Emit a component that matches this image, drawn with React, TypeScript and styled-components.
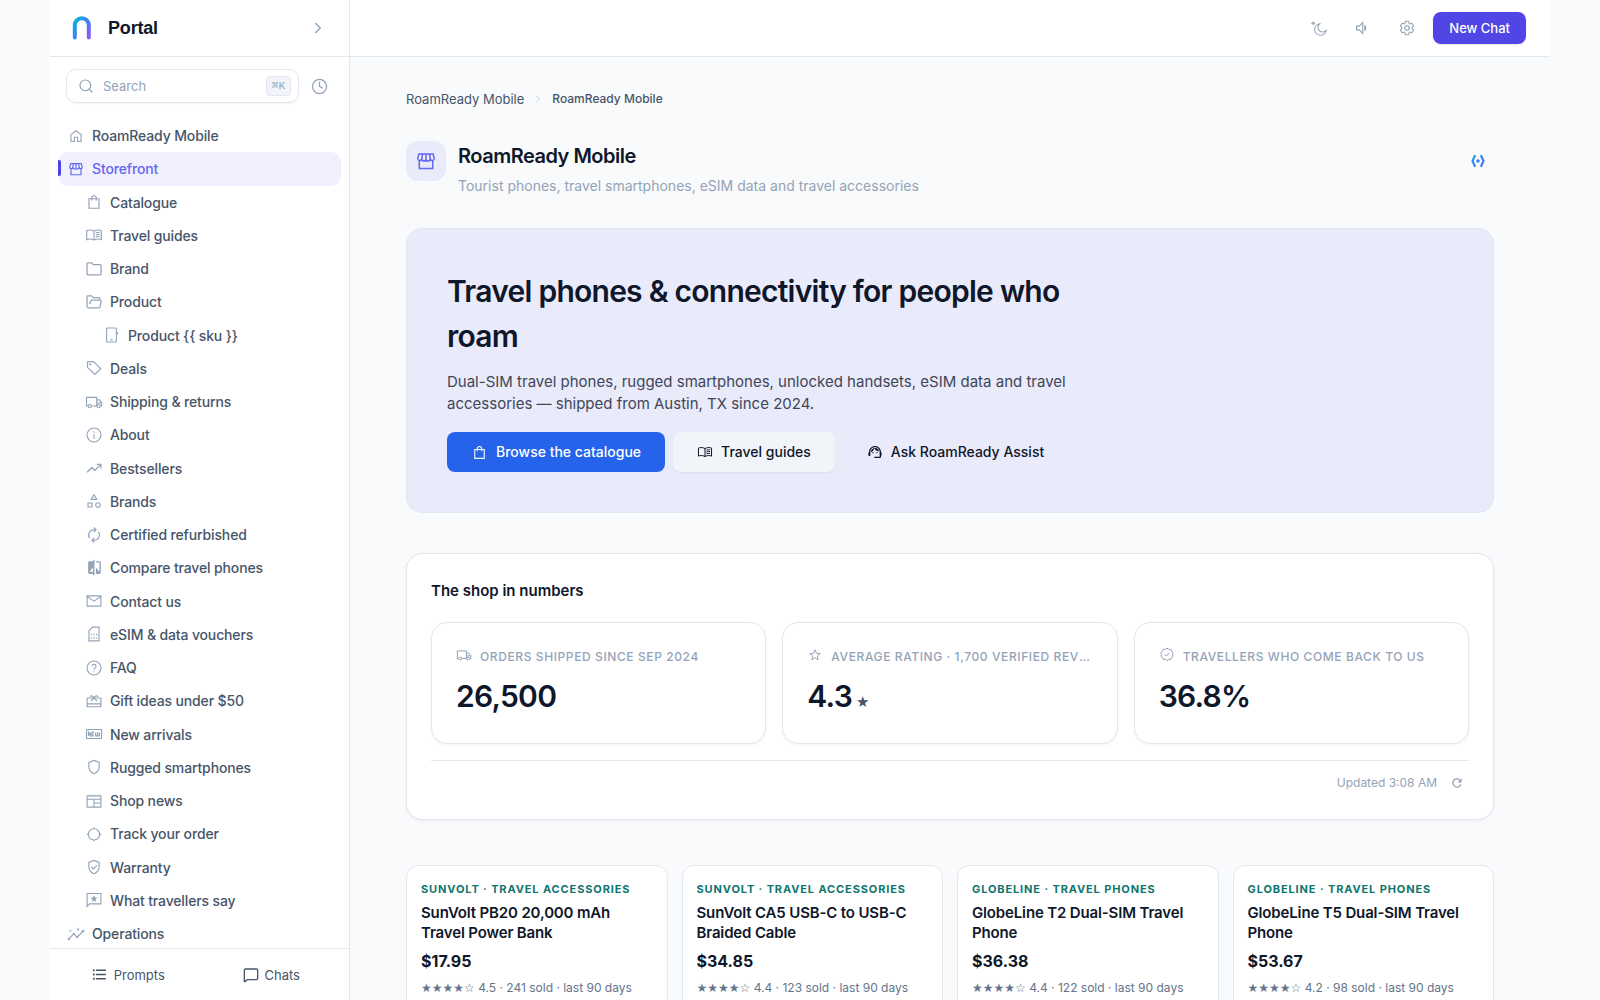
import React from "react";
import styled, { createGlobalStyle } from "styled-components";
import { MdCompare, MdRefresh, MdFormatListBulleted, MdSupportAgent } from "react-icons/md";
import { HiOutlineCog6Tooth } from "react-icons/hi2";
import { ChevronRight, Clock, MessageSquare, Search } from "lucide-react";

const color = {
  page: "#f8fafc",
  surface: "#ffffff",
  line: "#e4e6ee",
  ink: "#0f172a",
  text: "#475569",
  muted: "#94a3b8",
  soft: "#e9eafa",
  accent: "#6366f1",
  accentStrong: "#4f46e5",
  blue: "#2563eb",
  teal: "#0f766e",
};

const GlobalStyle = createGlobalStyle`
  *, *::before, *::after { box-sizing: border-box; }
  body {
    margin: 0;
    background: ${color.page};
    color: ${color.ink};
    font-family: Inter, "Liberation Sans", sans-serif;
    font-size: 14px;
    line-height: 20px;
  }
  h1, h2, h3, p, ul { margin: 0; padding: 0; }
  ul { list-style: none; }
  a { color: inherit; text-decoration: none; }
  button, input { font: inherit; }
  button { border: 0; padding: 0; background: none; color: inherit; cursor: pointer; }
`;

/* ---------- icons ---------- */

const Line = styled.svg.attrs({ viewBox: "0 0 24 24", "aria-hidden": true })<{ $size?: number }>`
  width: ${(p) => p.$size ?? 18}px;
  height: ${(p) => p.$size ?? 18}px;
  flex: none;
  fill: none;
  stroke: currentColor;
  stroke-width: 1.5;
`;

const shapes: Record<string, React.ReactNode> = {
  home: <path d="M5.3 10.2 12 5.1l6.7 5.1v9.1h-4.6v-5.6H9.9v5.6H5.3z" />,
  store: (
    <path d="M5.3 12v7.6h13.4V12M4.9 4.9 3.7 9.5A2.1 2.1 0 0 0 7.8 10a2.1 2.1 0 0 0 4.2 0 2.1 2.1 0 0 0 4.2 0 2.1 2.1 0 0 0 4.1-.5l-1.2-4.6zM8.5 4.9 7.8 10M12 4.9V10M15.5 4.9l.7 5.1" />
  ),
  bag: <path d="M5.3 7.7h13.4v12.6H5.3zM9 10.4V6.6a3 3 0 0 1 6 0v3.8" />,
  book: (
    <path d="M12 6.9C10.3 5.8 8.6 5.3 6.6 5.3c-1.7 0-3.2.3-4.4.9v12c1.2-.6 2.7-.9 4.4-.9 2 0 3.7.5 5.4 1.5 1.7-1 3.4-1.5 5.4-1.5 1.7 0 3.2.3 4.4.9v-12c-1.2-.6-2.7-.9-4.4-.9-2 0-3.7.5-5.4 1.6zv11.9M14.4 9.2c1.7-.6 3.4-.7 5.2-.4M14.4 11.9c1.7-.6 3.4-.7 5.2-.4M14.4 14.6c1.7-.6 3.4-.7 5.2-.4" />
  ),
  folder: (
    <path strokeWidth="1.7" d="M2.7 18V5q0-1.3 1.3-1.3h4.8l2.3 2.5h8.7q1.6 0 1.6 1.6V18q0 1.7-1.7 1.7H4.3Q2.7 19.7 2.7 18z" />
  ),
  folderOpen: (
    <path strokeWidth="1.7" d="M19.6 9.2V7.8q0-1.5-1.5-1.5h-7L8.8 3.7H4Q2.7 3.7 2.7 5v13q0 1.7 1.7 1.7h14q1.3 0 1.7-1.2l1.3-7.2q.2-1.9-1.4-1.9H9.2q-1.1 0-1.4 1l-1.5 4.6" />
  ),
  phone: <path d="M5.8 2.6h11q1 0 1 1v16.8q0 1-1 1h-11q-1 0-1-1V3.6q0-1 1-1zM9.3 18.3h4M19.3 8.2v3.2" />,
  tag: (
    <>
      <path d="M3.3 4.6v6.5l9.9 9.6 7.9-7.7-9.8-9.5H4.4q-1.1 0-1.1 1.1z" />
      <circle cx="6.9" cy="7.1" r=".7" />
    </>
  ),
  truck: (
    <>
      <path d="M4.2 17.3H2V5.9h13.6v11.4H8.5M15.6 9.2h3.7l3 4v4.1h-2M15.6 17.3h.6M15.6 13.3h6.5" />
      <circle cx="6.3" cy="17.5" r="2.1" />
      <circle cx="18.2" cy="17.5" r="2.1" />
    </>
  ),
  info: (
    <>
      <circle cx="12" cy="12" r="9.3" />
      <path d="M12 11v6M12 7.2v1.7" />
    </>
  ),
  trend: <path strokeWidth="1.7" d="m2.7 17.6 6.4-6.3 4 3.9 7.7-7.7M15.6 7.1h5.6v5.6" />,
  shapes: (
    <>
      <path d="m12 3.6 3.7 6.3H8.3zM4 14.6h5.4V20H4z" />
      <circle cx="17.3" cy="17.3" r="3" />
    </>
  ),
  renew: (
    <path d="M14.3 5H12a7.2 7.2 0 0 0-6 11.2M9.7 19H12a7.2 7.2 0 0 0 6-11.2M11.8 2l3 3-3 3M12.2 22l-3-3 3-3" />
  ),
  mail: <path d="M2.8 5.2h18.4v13.6H2.8zM2.8 5.8 12 12.2l9.2-6.4" />,
  sim: (
    <>
      <path d="M10.1 2.9h8.6v18.2H5.3V7.7z" />
      <path d="M8.5 11.6v2M8.5 16.5v1.8M12 11.2v2M12 15.5v2.8M15.5 11.6v2M15.5 16.5v1.8" />
    </>
  ),
  help: (
    <>
      <circle cx="12" cy="12" r="9.3" />
      <path d="M9.3 9.7a2.7 2.7 0 1 1 4.6 1.9c-.9.9-1.9 1.3-1.9 2.7M12 16.2v1.5" />
    </>
  ),
  gift: <path d="M2.8 8h18.4v11.7H2.8zM2.8 15.8h18.4M8 12l4-4 4 4M12 8c-1-3-5-4-5.2-1.5M12 8c1-3 5-4 5.2-1.5" />,
  fresh: (
    <>
      <path d="M2 6h20v12H2z" />
      <path d="M4.6 14.5v-5l3 5v-5M12 9.5H9.5v5H12M9.5 12h2M14.2 9.5v5h5v-5M16.7 9.5v4.5" />
    </>
  ),
  shield: <path d="m12 3.2 6.9 2.6v5.6c0 4.4-2.9 8.1-6.9 9.5-4-1.4-6.9-5.1-6.9-9.5V5.8z" />,
  shieldCheck: (
    <path d="m12 3.2 6.9 2.6v5.6c0 4.4-2.9 8.1-6.9 9.5-4-1.4-6.9-5.1-6.9-9.5V5.8zM8.5 12l2.6 2.6 4.8-4.9" />
  ),
  news: (
    <path d="M2.8 5.4h18.4v14.8H2.8zM2.8 9.7h18.4M12 9.7v10.5M12 14.6h9.2M4.4 3.8v1.6M7.5 3.8v1.6M10.5 3.8v1.6M13.5 3.8v1.6M16.5 3.8v1.6M19.6 3.8v1.6" />
  ),
  target: (
    <>
      <circle cx="12" cy="12.5" r="7.5" />
      <path d="M12 3v2M12 20v2M2.5 12.5h2M19.5 12.5h2" />
    </>
  ),
  review: (
    <>
      <path d="M2.8 20.5V3.3h18.4v13.9H6.1z" />
      <path
        fill="currentColor"
        stroke="none"
        d="m12 5.5 1.3 3.2 3.4.2-2.6 2.2.8 3.4-2.9-1.9-2.9 1.9.8-3.4-2.6-2.2 3.4-.2z"
      />
    </>
  ),
  insights: (
    <>
      <path d="m2.5 18.5 6.5-6.7 4.5 4.4 8-8.2" />
      <g fill="currentColor" stroke="none">
        <circle cx="2.6" cy="18.6" r="1.7" />
        <circle cx="9" cy="11.8" r="1.5" />
        <circle cx="13.6" cy="16.3" r="1.5" />
        <circle cx="21.4" cy="8" r="1.7" />
        <path d="m14.8 3 .7 1.9 1.9.7-1.9.7-.7 1.9-.7-1.9-1.9-.7 1.9-.7zM4.6 6l.5 1.4 1.4.5-1.4.5L4.6 9.800l-.5-1.400-1.400-.5 1.400-.5z" />
      </g>
    </>
  ),
  star: <path d="m12 4.2 2.2 5.2 5.6.5-4.3 3.7 1.3 5.5-4.8-2.9-4.8 2.9 1.3-5.5-4.3-3.7 5.6-.5z" />,
  verified: (
    <>
      <path d="m12 1.8 2.6 1.7 3.1-.1.9 3 2.6 1.7-1.1 2.9 1.1 2.9-2.6 1.7-.9 3-3.1-.1-2.6 1.7-2.6-1.700-3.100.1-.9-3-2.600-1.700L3.900 11 2.800 8.100l2.600-1.700.9-3 3.100.1z" />
      <path d="m8.500 11 2.500 2.500 4.600-4.700" />
    </>
  ),
  moon: (
    <>
      <path d="M12.700 6.400a7.700 7.700 0 1 0 8.700 9.200 6.300 6.300 0 0 1-8.700-9.200z" />
      <path fill="currentColor" stroke="none" d="m4.200 2.200 1 2.500 2.500 1-2.500 1-1 2.500-1-2.500-2.500-1 2.500-1z" />
    </>
  ),
  volume: <path d="M3.400 9.500v5h3.500l4.700 4.600V4.900L6.900 9.500zM14.400 9v6c1.600-1.200 1.600-4.800 0-6z" />,
};

const Icon = ({ name, size }: { name: string; size?: number }) => {
  if (name === "compare") return <MdCompare size={17} aria-hidden />;
  if (name === "agent") return <MdSupportAgent size={16} aria-hidden />;
  return <Line $size={size}>{shapes[name]}</Line>;
};

/* ---------- shell ---------- */

const Shell = styled.div`
  display: flex;
  max-width: 1500px;
  height: 100vh;
  margin: 0 auto;
`;

const Sidebar = styled.aside`
  display: flex;
  flex-direction: column;
  flex: none;
  width: 300px;
  background: ${color.surface};
  border-right: 1px solid ${color.line};
`;

const BrandBar = styled.div`
  display: flex;
  align-items: center;
  height: 57px;
  flex: none;
  padding: 0 19px 0 20px;
  border-bottom: 1px solid ${color.line};
`;

const BrandLink = styled.a`
  display: flex;
  align-items: center;
  gap: 14px;
  flex: 1;
  font: bold 18px/24px "Liberation Sans", Arial, sans-serif;
  letter-spacing: -0.01em;
`;

const Logo = styled.svg`
  width: 24px;
  height: 24px;
`;

const IconButton = styled.button<{ $size?: number }>`
  display: grid;
  place-items: center;
  flex: none;
  width: ${(p) => p.$size ?? 24}px;
  height: ${(p) => p.$size ?? 24}px;
  border-radius: 8px;
  color: ${color.muted};
`;

const SearchRow = styled.div`
  display: flex;
  align-items: center;
  gap: 8px;
  padding: 12px 18px 12px 16px;
`;

const SearchBox = styled.label`
  display: flex;
  align-items: center;
  flex: 1;
  min-width: 0;
  gap: 9px;
  height: 34px;
  padding: 0 7px 0 11px;
  border: 1px solid ${color.line};
  border-radius: 10px;
  box-shadow: 0 1px 2px rgba(15, 23, 42, 0.05);
  color: ${color.muted};
  & > svg { flex: none; }
`;

const SearchInput = styled.input`
  flex: 1;
  width: 0;
  min-width: 0;
  padding: 0;
  border: 0;
  outline: 0;
  background: none;
  font-size: 13px;
  &::placeholder {
    color: ${color.muted};
    opacity: 1;
  }
`;

const Shortcut = styled.kbd`
  flex: none;
  padding: 0 5px;
  border: 1px solid ${color.line};
  border-radius: 4px;
  background: #f1f5f9;
  font: 11px/18px "Liberation Mono", "DejaVu Sans Mono", monospace;
`;

const Nav = styled.nav`
  flex: 1;
  min-height: 0;
  overflow: hidden;
  padding: 4px 8px 0;
`;

const NavLink = styled.a<{ $depth: number; $active?: boolean }>`
  position: relative;
  display: flex;
  align-items: center;
  gap: 6px;
  padding: 7px 8px 7px ${(p) => 8 + p.$depth * 18}px;
  border-radius: 10px;
  font-weight: 500;
  line-height: 1.375;
  letter-spacing: -0.01em;
  color: ${(p) => (p.$active ? color.accent : color.text)};
  background: ${(p) => (p.$active ? "#f1f0fe" : "transparent")};
  &::before {
    content: "";
    display: ${(p) => (p.$active ? "block" : "none")};
    position: absolute;
    left: 0;
    top: 8px;
    width: 3px;
    height: 16px;
    border-radius: 0 2px 2px 0;
    background: ${color.accentStrong};
  }
`;

const NavIcon = styled.span<{ $active?: boolean }>`
  display: grid;
  place-items: center;
  width: 20px;
  height: 18px;
  color: ${(p) => (p.$active ? color.accent : color.muted)};
`;

const SidebarFooter = styled.div`
  display: flex;
  gap: 4px;
  flex: none;
  padding: 8px;
  border-top: 1px solid ${color.line};
`;

const FooterButton = styled.button`
  display: flex;
  align-items: center;
  justify-content: center;
  gap: 6px;
  flex: 1;
  height: 35px;
  font-size: 13px;
  color: ${color.text};
`;

const Main = styled.main`
  display: flex;
  flex-direction: column;
  flex: 1;
  min-width: 0;
`;

const TopBar = styled.header`
  display: flex;
  align-items: center;
  justify-content: flex-end;
  gap: 8px;
  flex: none;
  height: 57px;
  padding: 0 24px;
  background: ${color.surface};
  border-bottom: 1px solid ${color.line};
`;

const NewChat = styled.button`
  height: 32px;
  padding: 0 16px;
  border-radius: 8px;
  background: ${color.accentStrong};
  box-shadow: 0 1px 2px rgba(15, 23, 42, 0.1);
  color: #fff;
  font-size: 13px;
  font-weight: 500;
`;

const Content = styled.div`
  flex: 1;
  min-height: 0;
  overflow: hidden;
  padding: 32px 56px;
`;

const Crumbs = styled.nav`
  display: flex;
  align-items: center;
  gap: 8px;
  color: ${color.text};
  font-size: 13px;
  & > svg { color: #cbd5e1; }
`;

const CurrentCrumb = styled.span`
  font-size: 12px;
  font-weight: 500;
`;

const PageHead = styled.div`
  display: flex;
  align-items: flex-start;
  gap: 12px;
  margin: 32px 0;
`;

const HeadAction = styled(IconButton)`
  width: 32px;
  height: 40px;
`;

const Tile = styled.div`
  display: grid;
  place-items: center;
  width: 40px;
  height: 40px;
  border-radius: 12px;
  background: ${color.soft};
  color: ${color.accent};
`;

const PageTitles = styled.div`
  flex: 1;
`;

const PageTitle = styled.h1`
  font-size: 20px;
  font-weight: 600;
  line-height: 30px;
  letter-spacing: -0.025em;
`;

const PageNote = styled.p`
  margin-top: 4px;
  line-height: 21px;
  color: ${color.muted};
`;

const Hero = styled.section`
  padding: 40px;
  border: 1px solid ${color.line};
  border-radius: 16px;
  background: ${color.soft};
`;

const HeroTitle = styled.h2`
  max-width: 640px;
  font-size: 30px;
  font-weight: 600;
  line-height: 45px;
  letter-spacing: -0.025em;
`;

const HeroText = styled.p`
  max-width: 640px;
  margin: 12px 0 17px;
  font-size: 15px;
  line-height: 22px;
  color: #3f4658;
`;

const Actions = styled.div`
  display: flex;
  gap: 8px;
`;

const Action = styled.a<{ $tone: "primary" | "secondary" | "ghost" }>`
  display: flex;
  align-items: center;
  gap: 8px;
  height: 40px;
  padding: 0 24px;
  border-radius: 8px;
  font-weight: 500;
  color: ${(p) => (p.$tone === "primary" ? "#fff" : color.ink)};
  background: ${(p) => ({ primary: color.blue, secondary: "#f1f5f9", ghost: "transparent" })[p.$tone]};
  box-shadow: ${(p) => (p.$tone === "secondary" ? "0 1px 2px rgba(15, 23, 42, 0.06)" : "none")};
`;

const Panel = styled.section`
  margin: 40px 0 45px;
  padding: 24px;
  border: 1px solid ${color.line};
  border-radius: 16px;
  background: ${color.surface};
  box-shadow: 0 1px 3px rgba(15, 23, 42, 0.06);
`;

const PanelTitle = styled.h3`
  font-size: 15px;
  font-weight: 600;
  line-height: 26px;
`;

const Stats = styled.div`
  display: grid;
  grid-template-columns: repeat(3, minmax(0, 1fr));
  gap: 16px;
  margin: 18px 0 16px;
`;

const Stat = styled.div`
  padding: 24px;
  border: 1px solid ${color.line};
  border-radius: 16px;
  box-shadow: 0 1px 3px rgba(15, 23, 42, 0.06);
`;

const StatLabel = styled.div`
  display: flex;
  gap: 8px;
  color: ${color.muted};
  font-size: 12px;
  font-weight: 500;
  letter-spacing: 0.05em;
  text-transform: uppercase;
`;

const Ellipsis = styled.span`
  overflow: hidden;
  text-overflow: ellipsis;
  white-space: nowrap;
`;

const StatValue = styled.div`
  display: flex;
  align-items: baseline;
  gap: 4px;
  margin-top: 6px;
  font-size: 30px;
  font-weight: 600;
  line-height: 46px;
  letter-spacing: -0.025em;
`;

const StatUnit = styled.span`
  font-family: "DejaVu Sans", sans-serif;
  font-size: 15px;
  font-weight: 400;
  line-height: 20px;
  color: ${color.text};
`;

const PanelFoot = styled.div`
  display: flex;
  align-items: center;
  justify-content: flex-end;
  gap: 8px;
  padding-top: 10px;
  border-top: 1px solid ${color.line};
  font-size: 12px;
  color: ${color.muted};
`;

const Products = styled.div`
  display: grid;
  grid-template-columns: repeat(4, minmax(0, 1fr));
  gap: 14px;
`;

const Product = styled.article`
  display: flex;
  flex-direction: column;
  gap: 5px;
  padding: 14px;
  border: 1px solid #e2e8f0;
  border-radius: 12px;
  background: ${color.surface};
`;

const ProductKind = styled.div`
  font-size: 11px;
  font-weight: 700;
  line-height: 18px;
  letter-spacing: 0.08em;
  text-transform: uppercase;
  color: ${color.teal};
`;

const ProductName = styled.h3`
  font-size: 15px;
  font-weight: 600;
  line-height: 20px;
  letter-spacing: -0.01em;
`;

const Price = styled.div`
  font-size: 16px;
  font-weight: 700;
  line-height: 26px;
`;

const Sold = styled.div`
  font-size: 12px;
  line-height: 18px;
  color: #64748b;
`;

const Stars = styled.span`
  font-family: "DejaVu Sans", sans-serif;
`;

/* ---------- data ---------- */

type Item = { label: string; icon: string; depth: number; active?: boolean };

const items: Item[] = [
  { label: "RoamReady Mobile", icon: "home", depth: 0 },
  { label: "Storefront", icon: "store", depth: 0, active: true },
  { label: "Catalogue", icon: "bag", depth: 1 },
  { label: "Travel guides", icon: "book", depth: 1 },
  { label: "Brand", icon: "folder", depth: 1 },
  { label: "Product", icon: "folderOpen", depth: 1 },
  { label: "Product {{ sku }}", icon: "phone", depth: 2 },
  { label: "Deals", icon: "tag", depth: 1 },
  { label: "Shipping & returns", icon: "truck", depth: 1 },
  { label: "About", icon: "info", depth: 1 },
  { label: "Bestsellers", icon: "trend", depth: 1 },
  { label: "Brands", icon: "shapes", depth: 1 },
  { label: "Certified refurbished", icon: "renew", depth: 1 },
  { label: "Compare travel phones", icon: "compare", depth: 1 },
  { label: "Contact us", icon: "mail", depth: 1 },
  { label: "eSIM & data vouchers", icon: "sim", depth: 1 },
  { label: "FAQ", icon: "help", depth: 1 },
  { label: "Gift ideas under $50", icon: "gift", depth: 1 },
  { label: "New arrivals", icon: "fresh", depth: 1 },
  { label: "Rugged smartphones", icon: "shield", depth: 1 },
  { label: "Shop news", icon: "news", depth: 1 },
  { label: "Track your order", icon: "target", depth: 1 },
  { label: "Warranty", icon: "shieldCheck", depth: 1 },
  { label: "What travellers say", icon: "review", depth: 1 },
  { label: "Operations", icon: "insights", depth: 0 },
];

const stats = [
  { icon: "truck", label: "Orders shipped since Sep 2024", value: "26,500" },
  { icon: "star", label: "Average rating · 1,700 verified reviews", value: "4.3", unit: "★" },
  { icon: "verified", label: "Travellers who come back to us", value: "36.8%" },
];

const products = [
  { kind: "SunVolt · Travel accessories", name: "SunVolt PB20 20,000 mAh Travel Power Bank", price: "$17.95", sold: "4.5 · 241 sold" },
  { kind: "SunVolt · Travel accessories", name: "SunVolt CA5 USB-C to USB-C Braided Cable", price: "$34.85", sold: "4.4 · 123 sold" },
  { kind: "GlobeLine · Travel phones", name: "GlobeLine T2 Dual-SIM Travel Phone", price: "$36.38", sold: "4.4 · 122 sold" },
  { kind: "GlobeLine · Travel phones", name: "GlobeLine T5 Dual-SIM Travel Phone", price: "$53.67", sold: "4.2 · 98 sold" },
];

/* ---------- page ---------- */

export default function App() {
  return (
    <>
      <GlobalStyle />
      <Shell>
        <Sidebar>
          <BrandBar>
            <BrandLink href="#">
              <Logo viewBox="0 0 24 24" aria-hidden>
                <defs>
                  <linearGradient id="arch" x1="0" y1="0" x2="1" y2="1">
                    <stop offset="0" stopColor="#06b6d4" />
                    <stop offset=".5" stopColor="#3b82f6" />
                    <stop offset="1" stopColor="#8b5cf6" />
                  </linearGradient>
                </defs>
                <path
                  d="M4.8 21.5V9.2a7 7 0 0 1 14 0v12.3"
                  fill="none"
                  stroke="url(#arch)"
                  strokeWidth="4"
                  strokeLinecap="round"
                />
              </Logo>
              Portal
            </BrandLink>
            <IconButton aria-label="Collapse sidebar">
              <ChevronRight size={18} strokeWidth={2} />
            </IconButton>
          </BrandBar>
          <SearchRow>
            <SearchBox>
              <Search size={16} strokeWidth={1.8} />
              <SearchInput placeholder="Search" aria-label="Search" />
              <Shortcut>⌘K</Shortcut>
            </SearchBox>
            <IconButton aria-label="History">
              <Clock size={17} strokeWidth={1.8} />
            </IconButton>
          </SearchRow>
          <Nav aria-label="Pages">
            <ul>
              {items.map((it) => (
                <li key={it.label}>
                  <NavLink href="#" $depth={it.depth} $active={it.active}>
                    <NavIcon $active={it.active}>
                      <Icon name={it.icon} />
                    </NavIcon>
                    {it.label}
                  </NavLink>
                </li>
              ))}
            </ul>
          </Nav>
          <SidebarFooter>
            <FooterButton>
              <MdFormatListBulleted size={17} aria-hidden />
              Prompts
            </FooterButton>
            <FooterButton>
              <MessageSquare size={16} strokeWidth={2} />
              Chats
            </FooterButton>
          </SidebarFooter>
        </Sidebar>

        <Main>
          <TopBar>
            <IconButton $size={36} aria-label="Dark mode">
              <Icon name="moon" />
            </IconButton>
            <IconButton $size={36} aria-label="Sound">
              <Icon name="volume" />
            </IconButton>
            <IconButton $size={36} aria-label="Settings">
              <HiOutlineCog6Tooth size={18} />
            </IconButton>
            <NewChat>New Chat</NewChat>
          </TopBar>

          <Content>
            <Crumbs aria-label="Breadcrumb">
              <a href="#">RoamReady Mobile</a>
              <ChevronRight size={12} />
              <CurrentCrumb>RoamReady Mobile</CurrentCrumb>
            </Crumbs>

            <PageHead>
              <Tile>
                <Icon name="store" size={24} />
              </Tile>
              <PageTitles>
                <PageTitle>RoamReady Mobile</PageTitle>
                <PageNote>Tourist phones, travel smartphones, eSIM data and travel accessories</PageNote>
              </PageTitles>
              <HeadAction aria-label="Assistant">
                <svg width="16" height="16" viewBox="0 0 16 16" fill="none" aria-hidden>
                  <defs>
                    <linearGradient id="brace" x1="0" y1="0" x2="16" y2="16" gradientUnits="userSpaceOnUse">
                      <stop offset="0" stopColor="#06b6d4" />
                      <stop offset=".5" stopColor="#3b82f6" />
                      <stop offset="1" stopColor="#6366f1" />
                    </linearGradient>
                  </defs>
                  <path
                    d="M4.8 3 2.5 8l2.3 5M11.2 3l2.3 5-2.3 5"
                    stroke="url(#brace)"
                    strokeWidth="2.2"
                    strokeLinecap="round"
                    strokeLinejoin="round"
                  />
                  <circle cx="8" cy="8" r="1.8" fill="#3b82f6" />
                </svg>
              </HeadAction>
            </PageHead>

            <Hero>
              <HeroTitle>Travel phones &amp; connectivity for people who roam</HeroTitle>
              <HeroText>
                Dual-SIM travel phones, rugged smartphones, unlocked handsets, eSIM data and travel accessories — shipped
                from Austin, TX since 2024.
              </HeroText>
              <Actions>
                <Action href="#" $tone="primary">
                  <Icon name="bag" size={17} />
                  Browse the catalogue
                </Action>
                <Action href="#" $tone="secondary">
                  <Icon name="book" size={16} />
                  Travel guides
                </Action>
                <Action href="#" $tone="ghost">
                  <Icon name="agent" size={16} />
                  Ask RoamReady Assist
                </Action>
              </Actions>
            </Hero>

            <Panel>
              <PanelTitle>The shop in numbers</PanelTitle>
              <Stats>
                {stats.map((s) => (
                  <Stat key={s.label}>
                    <StatLabel>
                      <Icon name={s.icon} size={16} />
                      <Ellipsis>{s.label}</Ellipsis>
                    </StatLabel>
                    <StatValue>
                      {s.value}
                      {s.unit && <StatUnit>{s.unit}</StatUnit>}
                    </StatValue>
                  </Stat>
                ))}
              </Stats>
              <PanelFoot>
                Updated 3:08 AM
                <IconButton aria-label="Refresh">
                  <MdRefresh size={14} />
                </IconButton>
              </PanelFoot>
            </Panel>

            <Products>
              {products.map((p) => (
                <Product key={p.name}>
                  <ProductKind>{p.kind}</ProductKind>
                  <ProductName>{p.name}</ProductName>
                  <Price>{p.price}</Price>
                  <Sold>
                    <Stars>★★★★☆</Stars> {p.sold} · last 90 days
                  </Sold>
                </Product>
              ))}
            </Products>
          </Content>
        </Main>
      </Shell>
    </>
  );
}
